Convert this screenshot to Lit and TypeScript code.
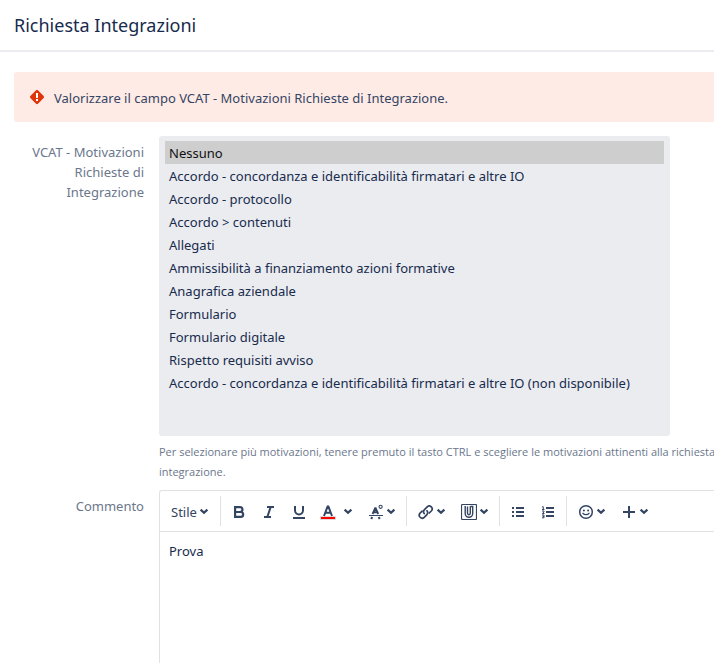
import { LitElement, html, css, svg } from "lit";
import { customElement, state } from "lit/decorators.js";

const REASONS = [
  "Nessuno",
  "Accordo - concordanza e identificabilità firmatari e altre IO",
  "Accordo - protocollo",
  "Accordo > contenuti",
  "Allegati",
  "Ammissibilità a finanziamento azioni formative",
  "Anagrafica aziendale",
  "Formulario",
  "Formulario digitale",
  "Rispetto requisiti avviso",
  "Accordo - concordanza e identificabilità firmatari e altre IO (non disponibile)",
];

const icon = (body: unknown) =>
  html`<svg class="icon" viewBox="0 0 16 16" aria-hidden="true">${body}</svg>`;

const chevron = html`<svg class="chevron" viewBox="0 0 10 10" aria-hidden="true">
  <path d="M1.6 2.6 5 5.8 8.4 2.6" fill="none" stroke="currentColor" stroke-width="2.2" />
</svg>`;

const ICONS = {
  bold: svg`<path fill="none" stroke="currentColor" stroke-width="2.2" d="M4.1 3.1H9a2.4 2.4 0 0 1 0 4.9H4.1zM4.1 8h5.6a2.4 2.4 0 0 1 0 4.9H4.1z"/>`,
  italic: svg`<path fill="none" stroke="currentColor" stroke-width="2" d="M6 3h7M3 13h7M9.7 3 6.3 13"/>`,
  underline: svg`<path fill="none" stroke="currentColor" stroke-width="2" d="M4 2v4.600a4 3.800 0 0 0 8 0V2M2 14h12"/>`,
  color: svg`<path fill="#ddd" d="M0 12h16v4H0z"/><path fill="#f00" d="M1 13h14v2H1z"/><path fill="none" stroke="currentColor" stroke-width="2" d="M4 12 7.6 2.4h.8L12 12M5.2 8.8h5.6"/>`,
  more: svg`<path fill="currentColor" d="M1 11h14v1H1z"/><path fill="none" stroke="currentColor" stroke-width="1.9" d="M4.6 10 7.1 4.3h.6L10.2 10M5.5 8.3h4"/><path fill="none" stroke="currentColor" stroke-width="2" d="M3.2 15l1-2M11.700 15l-1-2"/><circle cx="12.6" cy="2.8" r="1.6" fill="none" stroke="currentColor" stroke-width="1.1"/>`,
  link: svg`<g fill="none" stroke="currentColor" stroke-width="1.7" stroke-linecap="round"><path d="M6.2 9.6a3.1 3.1 0 0 1 .3-4l2.700-2.700a2.900 2.900 0 0 1 4.100 4.100l-2 2"/><path d="M9 6.800a3.100 3.100 0 0 1-.3 4L6.200 13.300a2.900 2.900 0 0 1-4.100-4.100l2-2"/></g>`,
  attach: svg`<rect x=".5" y=".5" width="15" height="15" rx="1" fill="none" stroke="currentColor" stroke-width="1.2"/><path fill="none" stroke="currentColor" stroke-width="1.4" d="M4.200 2v7.500a3.700 3.700 0 0 0 7.500 0V2.500H9.300M6.500 2.500v6.800a1.400 1.400 0 0 0 2.800 0v-7"/>`,
  bullets: svg`<path fill="currentColor" d="M2 3h2v2H2zm4 0h8v2H6zM2 7h2v2H2zm4 0h8v2H6zM2 11h2v2H2zm4 0h8v2H6z"/>`,
  numbers: svg`<path fill="currentColor" d="M6 3h8v2H6zM6 7h8v2H6zM6 11h8v2H6z"/><path fill="none" stroke="currentColor" stroke-width="1" d="M2 2.800h1.300v2.700M2 5.500h2.500M2 7h2v1L2.300 9.500h2.200M2 11h2v2.800H2M2.500 12.400H4"/>`,
  smile: svg`<circle cx="8" cy="8" r="6.300" fill="none" stroke="currentColor" stroke-width="1.500"/><circle cx="5.900" cy="6.400" r="1" fill="currentColor"/><circle cx="10.100" cy="6.400" r="1" fill="currentColor"/><path fill="none" stroke="currentColor" stroke-width="1.300" stroke-linecap="round" d="M5 9.300a3.400 2.400 0 0 0 6 0"/>`,
  plus: svg`<path fill="none" stroke="currentColor" stroke-width="2" d="M8 2v12M2 8h12"/>`,
};

@customElement("app-root")
export class AppRoot extends LitElement {
  @state() private selected = 0;

  static styles = css`
    :host {
      display: flex;
      flex-direction: column;
      min-height: 100vh;
      overflow-x: hidden;
      background: #fff;
      color: #172b4d;
      font: 13px/20px "Noto Sans", "Open Sans", sans-serif;
    }
    * { box-sizing: border-box; }
    .header {
      padding: 10px 14px;
      border-bottom: 2px solid #ebecf0;
    }
    .title {
      margin: 0;
      font-size: 18px;
      font-weight: 400;
      line-height: 30px;
    }
    .body {
      flex: 1;
      display: flex;
      flex-direction: column;
      padding: 20px 0 0 14px;
    }
    .message {
      display: flex;
      align-items: center;
      gap: 9px;
      padding: 16px 15px 14px;
      background: #ffebe6;
      border-radius: 3px 0 0 3px;
      color: #344563;
    }
    .warning { width: 16px; height: 16px; flex: none; margin-bottom: 2px; }
    .field {
      display: grid;
      grid-template-columns: 130px minmax(0, 1fr);
      column-gap: 15px;
      margin-top: 14px;
    }
    .field.grow { flex: 1; margin-top: 8px; }
    .label {
      padding-top: 6px;
      color: #6b778c;
      text-align: right;
    }
    .list {
      display: block;
      width: 92%;
      max-width: 511px;
      height: 300px;
      margin: 0;
      padding: 3px 4px;
      border: 2px solid #ebecf0;
      border-radius: 3px;
      background: #ebecf0;
      color: #172b4d;
      font: inherit;
      outline: none;
      overflow: hidden;
    }
    .list option {
      min-height: 23px;
      padding: 3px 4px 0;
      line-height: 18px;
    }
    .list option:checked {
      background: #cecece linear-gradient(#cecece, #cecece);
      color: #101010;
    }
    .hint {
      margin: 6px 0 0;
      color: #6b778c;
      font-family: "Open Sans", "Noto Sans", sans-serif;
      font-size: 11px;
      line-height: 20px;
      white-space: nowrap;
    }
    .editor {
      display: flex;
      flex-direction: column;
      border: 1px solid #dfe1e5;
      border-width: 1px 0 0 1px;
      border-radius: 3px 0 0 0;
    }
    .toolbar {
      display: flex;
      padding: 5px 0;
      border-bottom: 1px solid #dfe1e5;
      color: #344563;
    }
    .group {
      display: flex;
      padding: 0 3px;
      border-right: 1px solid #dfe1e5;
    }
    .group:last-child { border-right: 0; }
    .tool {
      display: flex;
      align-items: center;
      height: 30px;
      margin: 0;
      padding: 2px 7px 0;
      border: 0;
      background: none;
      color: inherit;
      font: inherit;
    }
    .style { gap: 2px; padding: 2px 8px 0; }
    .menu { gap: 2px; padding-left: 8px; }
    .wide { gap: 7px; padding-left: 6px; }
    .icon { width: 16px; height: 16px; }
    .chevron { width: 10px; height: 10px; }
    .text {
      flex: 1;
      min-height: 120px;
      margin: 0;
      padding: 9px;
      border: 0;
      background: #fff;
      color: inherit;
      font: inherit;
      outline: none;
      resize: none;
    }
  `;

  private tool(label: string, body: unknown, kind = "") {
    return html`<button class="tool ${kind}" type="button" aria-label=${label}>
      ${icon(body)}${kind ? chevron : ""}
    </button>`;
  }

  render() {
    return html`
      <header class="header"><h2 class="title">Richiesta Integrazioni</h2></header>
      <form class="body">
        <div class="message" role="alert">
          <svg class="warning" viewBox="0 0 16 16" aria-hidden="true">
            <rect x="2.600" y="2.600" width="10.800" height="10.800" rx="1.400" transform="rotate(45 8 8)" fill="#de350b" />
            <path d="M7 4h2v5H7zM7 10h2v2H7z" fill="#fff" />
          </svg>
          <span>Valorizzare il campo VCAT - Motivazioni Richieste di Integrazione.</span>
        </div>
        <div class="field">
          <label class="label" for="reasons">VCAT - Motivazioni Richieste di Integrazione</label>
          <div>
            <select
              class="list"
              id="reasons"
              multiple
              aria-describedby="hint"
              @change=${(e: Event) => (this.selected = (e.target as HTMLSelectElement).selectedIndex)}
            >
              ${REASONS.map((r, i) => html`<option ?selected=${i === this.selected}>${r}</option>`)}
            </select>
            <p class="hint" id="hint">
              Per selezionare più motivazioni, tenere premuto il tasto CTRL e scegliere le motivazioni attinenti alla richiesta<br />integrazione.
            </p>
          </div>
        </div>
        <div class="field grow">
          <label class="label" for="comment">Commento</label>
          <div class="editor">
            <div class="toolbar" role="toolbar">
              <div class="group">
                <button class="tool style" type="button">Stile${chevron}</button>
              </div>
              <div class="group">
                ${this.tool("Grassetto", ICONS.bold)}
                ${this.tool("Corsivo", ICONS.italic)}
                ${this.tool("Sottolineato", ICONS.underline)}
                ${this.tool("Colore", ICONS.color, "wide")}
                ${this.tool("Altri stili", ICONS.more, "menu")}
              </div>
              <div class="group">
                ${this.tool("Collegamento", ICONS.link, "menu")}
                ${this.tool("Allegato", ICONS.attach, "menu")}
              </div>
              <div class="group">
                ${this.tool("Elenco puntato", ICONS.bullets)}
                ${this.tool("Elenco numerato", ICONS.numbers)}
              </div>
              <div class="group">
                ${this.tool("Emoticon", ICONS.smile, "menu")}
                ${this.tool("Inserisci", ICONS.plus, "menu")}
              </div>
            </div>
            <textarea class="text" id="comment" .value=${"Prova"}></textarea>
          </div>
        </div>
      </form>
    `;
  }
}
